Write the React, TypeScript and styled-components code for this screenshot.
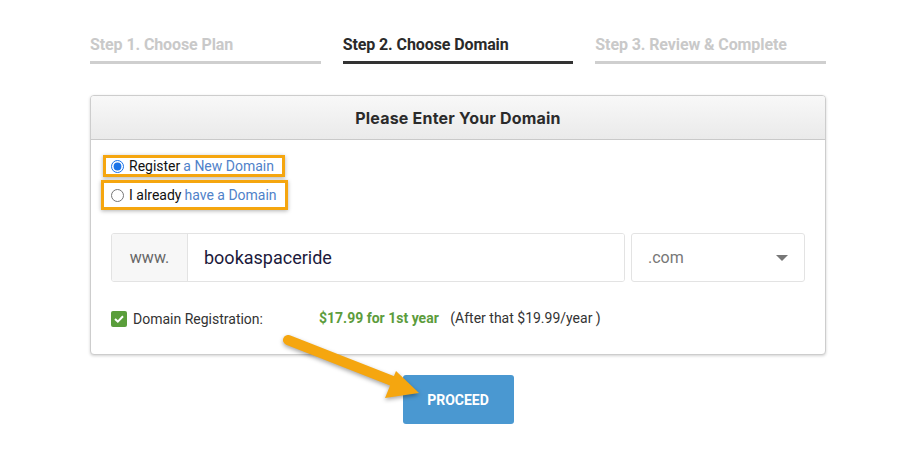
import React from 'react';
import styled, { createGlobalStyle } from 'styled-components';

const GlobalStyle = createGlobalStyle`
  *, *::before, *::after {
    box-sizing: border-box;
  }
  body {
    margin: 0;
    background: #fff;
    font-family: Roboto, "Liberation Sans", sans-serif;
  }
`;

const Page = styled.div`
  position: relative;
  width: 736px;
  margin: 0 0 0 90px;
  padding-top: 36px;
  height: 429px;
`;

const Steps = styled.div`
  display: grid;
  grid-template-columns: repeat(3, 1fr);
  gap: 22px;
`;

const Step = styled.div<{ $active?: boolean }>`
  font: 700 16px/18px Roboto, sans-serif;
  letter-spacing: -0.1px;
  color: ${p => (p.$active ? '#2a2a2a' : '#c9c9c9')};
  padding-bottom: 7px;
  border-bottom: 3px solid ${p => (p.$active ? '#333' : '#cfcfcf')};
`;

const Card = styled.div`
  margin-top: 31px;
  border: 1px solid #cdcdcd;
  border-radius: 4px;
  box-shadow: 0 1px 3px rgba(0, 0, 0, 0.18);
  background: #fff;
  overflow: hidden;
`;

const CardHeader = styled.div`
  height: 44px;
  display: flex;
  align-items: center;
  justify-content: center;
  background: linear-gradient(#f8f8f8, #eaeaea);
  border-bottom: 1px solid #c9c9c9;
  font: 700 16px Inter, "Open Sans", sans-serif;
  letter-spacing: 0.2px;
  color: #2b2b2b;
`;

const CardBody = styled.div`
  padding: 15px 20px 27px;
`;

const RadioList = styled.div`
  display: flex;
  flex-direction: column;
  align-items: flex-start;
  gap: 3px;
`;

const RadioLabel = styled.label<{ $tall?: boolean }>`
  display: flex;
  align-items: center;
  gap: 3px;
  margin-left: ${p => (p.$tall ? '-10px' : '-8px')};
  padding: ${p => (p.$tall ? '4px 8px 4px 7px' : '0 8px 0 5px')};
  border: 3px solid #f5a60f;
  box-shadow: 0 1px 4px rgba(0, 0, 0, 0.3);
  font-size: 14px;
  line-height: 16px;
  color: #111;
  input {
    margin: 0 2px 0 0;
    width: 13px;
    height: 13px;
    accent-color: #1a73e8;
  }
`;

const LinkText = styled.span`
  color: #4f82c9;
`;

const InputRow = styled.div`
  display: flex;
  gap: 6px;
  margin-top: 23px;
  height: 49px;
`;

const InputGroup = styled.div`
  flex: 1;
  display: flex;
  border: 1px solid #e3e3e3;
  border-radius: 3px;
  overflow: hidden;
`;

const Addon = styled.div`
  width: 76px;
  display: flex;
  align-items: center;
  justify-content: center;
  background: #f7f7f7;
  border-right: 1px solid #e3e3e3;
  color: #666;
  font-size: 16px;
`;

const DomainInput = styled.input`
  flex: 1;
  min-width: 0;
  border: none;
  outline: none;
  padding: 0 16px;
  font: 400 18px Roboto, sans-serif;
  color: #1c1a3c;
`;

const Select = styled.div`
  width: 174px;
  display: flex;
  align-items: center;
  justify-content: space-between;
  padding: 0 16px;
  border: 1px solid #e3e3e3;
  border-radius: 3px;
  color: #777;
  font-size: 16px;
`;

const Caret = styled.span`
  width: 0;
  height: 0;
  border-left: 6px solid transparent;
  border-right: 6px solid transparent;
  border-top: 6px solid #777;
`;

const CheckRow = styled.div`
  display: grid;
  grid-template-columns: 208px auto 1fr;
  align-items: center;
  margin-top: 27px;
  font-size: 14px;
  color: #333;
`;

const CheckLabel = styled.div`
  display: flex;
  align-items: center;
  gap: 6px;
  padding-top: 2px;
`;

const CheckBox = styled.span`
  width: 16px;
  height: 16px;
  border-radius: 2px;
  background: #5a9e3b;
  display: flex;
  align-items: center;
  justify-content: center;
`;

const Price = styled.span`
  color: #5c9c3c;
  font-weight: 700;
  margin-right: 8px;
`;

const ButtonRow = styled.div`
  display: flex;
  justify-content: center;
  margin-top: 20px;
`;

const Proceed = styled.button`
  width: 111px;
  height: 49px;
  border: none;
  border-radius: 3px;
  background: #4a98d1;
  color: #fff;
  font: 700 14px Roboto, sans-serif;
  text-transform: uppercase;
`;

const Arrow = styled.svg`
  position: absolute;
  left: -90px;
  top: 0;
  width: 919px;
  height: 464px;
  pointer-events: none;
  filter: drop-shadow(0 2px 2px rgba(0, 0, 0, 0.35));
`;

export default function App() {
  return (
    <>
      <GlobalStyle />
      <Page>
        <Steps>
          <Step>Step 1. Choose Plan</Step>
          <Step $active>Step 2. Choose Domain</Step>
          <Step>Step 3. Review &amp; Complete</Step>
        </Steps>
        <Card>
          <CardHeader>Please Enter Your Domain</CardHeader>
          <CardBody>
            <RadioList>
              <RadioLabel>
                <input type="radio" name="d" defaultChecked />
                Register <LinkText>a New Domain</LinkText>
              </RadioLabel>
              <RadioLabel $tall>
                <input type="radio" name="d" />
                I already <LinkText>have a Domain</LinkText>
              </RadioLabel>
            </RadioList>
            <InputRow>
              <InputGroup>
                <Addon>www.</Addon>
                <DomainInput defaultValue="bookaspaceride" />
              </InputGroup>
              <Select>
                .com
                <Caret />
              </Select>
            </InputRow>
            <CheckRow>
              <CheckLabel>
                <CheckBox>
                  <svg width="10" height="8" viewBox="0 0 10 8">
                    <path d="M1 4l2.8 2.6L9 1.2" fill="none" stroke="#fff" strokeWidth="2" />
                  </svg>
                </CheckBox>
                Domain Registration:
              </CheckLabel>
              <div>
                <Price>$17.99 for 1st year</Price> (After that $19.99/year )
              </div>
            </CheckRow>
          </CardBody>
        </Card>
        <ButtonRow>
          <Proceed>Proceed</Proceed>
        </ButtonRow>
        <Arrow viewBox="0 0 919 464">
          <line x1="288" y1="340" x2="395" y2="382" stroke="#f5a60f" strokeWidth="10" strokeLinecap="round" />
          <polygon points="396,371 385,398 419,393" fill="#f5a60f" />
        </Arrow>
      </Page>
    </>
  );
}
